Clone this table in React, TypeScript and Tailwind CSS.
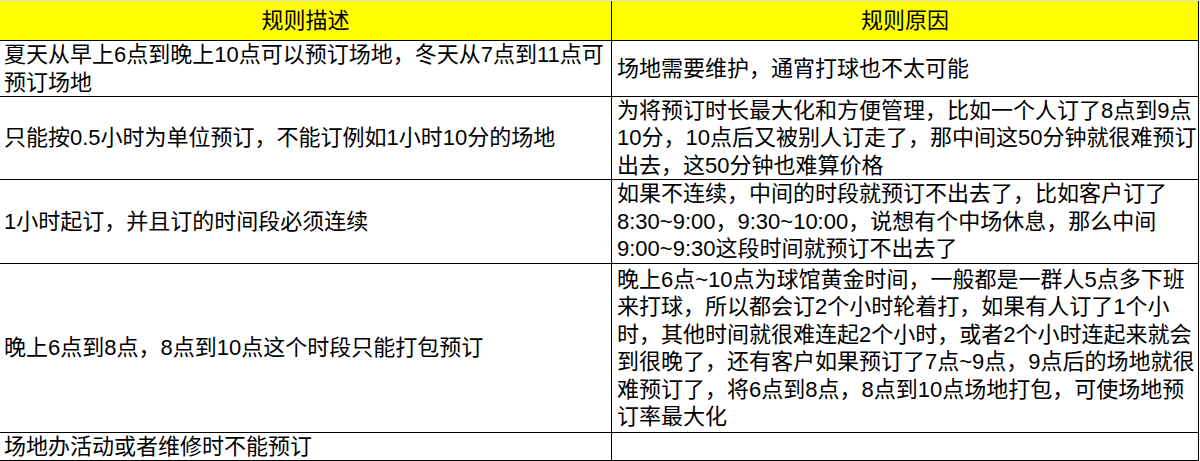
const rows: { h: string; left: string[]; right: string[] }[] = [
  {
    h: 'h-[56px]',
    left: ['夏天从早上6点到晚上10点可以预订场地，冬天从7点到11点可', '预订场地'],
    right: ['场地需要维护，通宵打球也不太可能'],
  },
  {
    h: 'h-[83px]',
    left: ['只能按0.5小时为单位预订，不能订例如1小时10分的场地'],
    right: [
      '为将预订时长最大化和方便管理，比如一个人订了8点到9点',
      '10分，10点后又被别人订走了，那中间这50分钟就很难预订',
      '出去，这50分钟也难算价格',
    ],
  },
  {
    h: 'h-[84px]',
    left: ['1小时起订，并且订的时间段必须连续'],
    right: [
      '如果不连续，中间的时段就预订不出去了，比如客户订了',
      '8:30~9:00，9:30~10:00，说想有个中场休息，那么中间',
      '9:00~9:30这段时间就预订不出去了',
    ],
  },
  {
    h: 'h-[169px]',
    left: ['晚上6点到8点，8点到10点这个时段只能打包预订'],
    right: [
      '晚上6点~10点为球馆黄金时间，一般都是一群人5点多下班',
      '来打球，所以都会订2个小时轮着打，如果有人订了1个小',
      '时，其他时间就很难连起2个小时，或者2个小时连起来就会',
      '到很晚了，还有客户如果预订了7点~9点，9点后的场地就很',
      '难预订了，将6点到8点，8点到10点场地打包，可使场地预',
      '订率最大化',
    ],
  },
  {
    h: 'h-[28px]',
    left: ['场地办活动或者维修时不能预订'],
    right: [],
  },
];

function Cell({ lines, className }: { lines: string[]; className: string }) {
  return (
    <div className={`flex flex-col justify-center border-r border-black ${className}`}>
      {lines.map((line, i) => (
        <div key={i} className="whitespace-nowrap">
          {line}
        </div>
      ))}
    </div>
  );
}

export default function App() {
  return (
    <div className="w-[1200px] h-[461px] bg-white text-black font-['Liberation_Sans','Noto_Sans_CJK_SC',sans-serif] text-[22px] leading-[27.5px]">
      <div className="w-[1199px] border-t border-[#dcdcdc]">
        {/* header */}
        <div className="flex h-[40px] bg-[#ffff00] border-b border-black">
          <div className="w-[612px] flex items-center justify-center border-r border-black">规则描述</div>
          <div className="w-[587px] flex items-center justify-center border-r border-black">规则原因</div>
        </div>

        {rows.map((row, i) => (
          <div key={i} className={`flex border-b border-black ${row.h}`}>
            <Cell lines={row.left} className="w-[612px] pl-[4px]" />
            <Cell lines={row.right} className="w-[587px] pl-[5px]" />
          </div>
        ))}
      </div>
    </div>
  );
}
